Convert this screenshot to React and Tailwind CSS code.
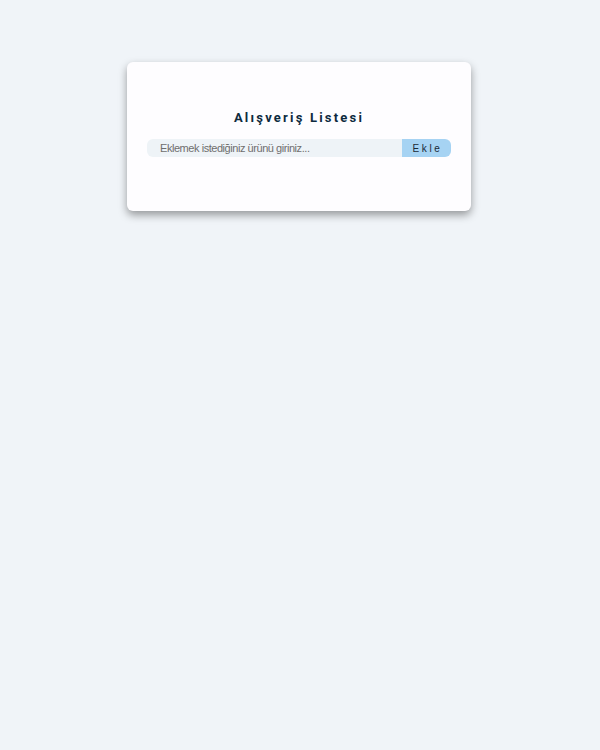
export default function App() {
  return (
    <div className="min-h-[750px] w-full bg-[#f0f4f8] pt-[62px]">
      <div className="ml-[127px] w-[344px] rounded-md bg-[#fefdff] px-5 pt-[48px] pb-[54px] shadow-[0_4px_9px_rgba(0,0,0,0.38)]">
        <h1 className="text-center font-['Roboto',sans-serif] text-[13px] font-bold tracking-[2.2px] text-[#0d2a3e] leading-[16px]">
          Alışveriş Listesi
        </h1>
        <div className="mt-[13px] flex h-[18px]">
          <input
            type="text"
            placeholder="Eklemek istediğiniz ürünü giriniz..."
            className="h-full flex-1 rounded-l-md bg-[#eef3f7] pl-[13px] font-['Liberation_Sans',Arial,sans-serif] text-[11px] tracking-[-0.45px] text-[#333] placeholder:text-[#6e6e6e] outline-none"
          />
          <button className="h-full w-[49px] rounded-r-md bg-[#a6d3f3] font-['Liberation_Sans',Arial,sans-serif] text-[10px] tracking-[2.6px] text-[#1a2a36] pl-[2px]">
            Ekle
          </button>
        </div>
      </div>
    </div>
  );
}
